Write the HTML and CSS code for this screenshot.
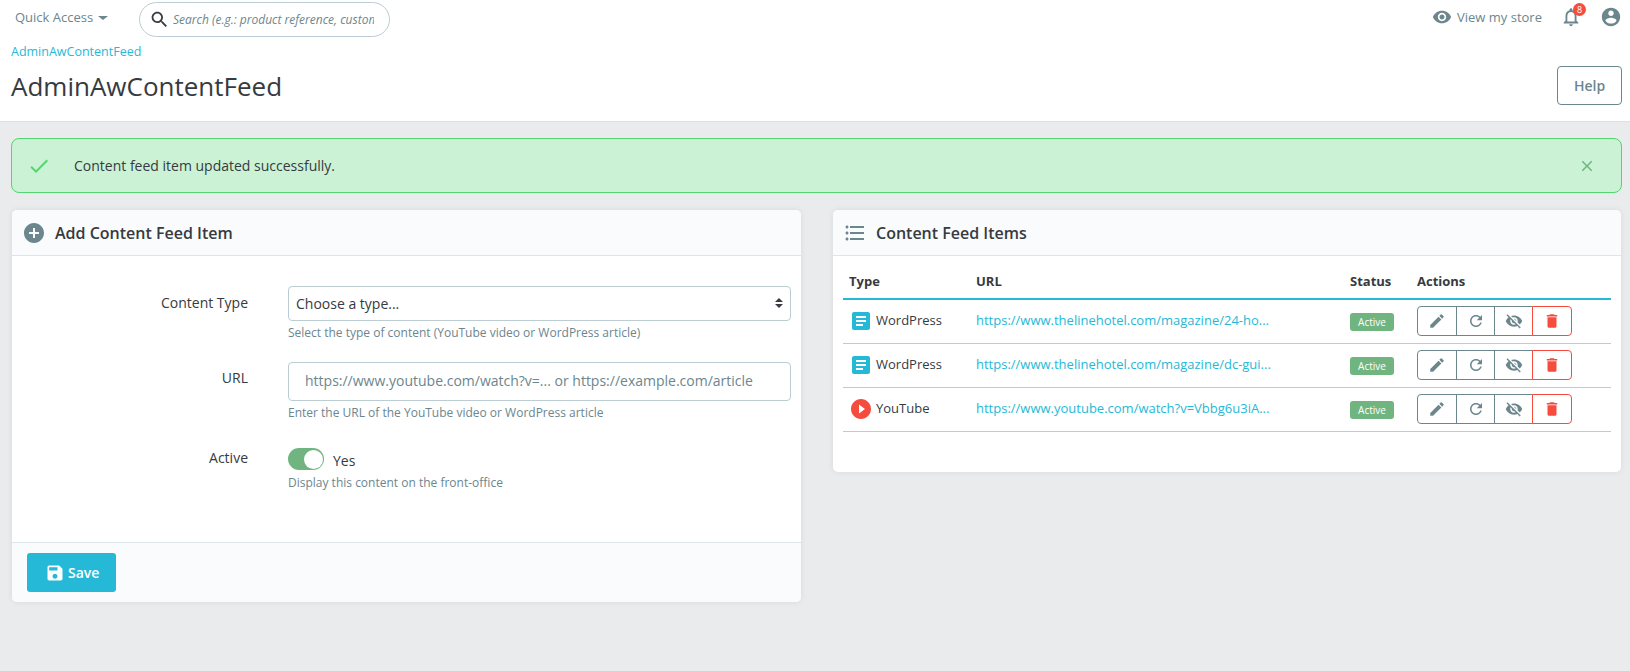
FILE: index.html
```html
<!DOCTYPE html>
<html lang="en">
<head>
    <meta charset="UTF-8">
    <meta name="viewport" content="width=device-width, initial-scale=1.0">
    <title>AdminAwContentFeed</title>
    <link rel="stylesheet" href="styles.css">
</head>
<body>
    <svg class="icon-defs" aria-hidden="true">
        <symbol id="i-search" viewBox="0 0 24 24"><path d="M15.5 14h-.79l-.28-.27C15.41 12.59 16 11.11 16 9.5 16 5.91 13.09 3 9.5 3S3 5.91 3 9.5 5.91 16 9.5 16c1.61 0 3.09-.59 4.23-1.57l.27.28v.79l5 4.99L20.49 19l-4.99-5zm-6 0C7.01 14 5 11.99 5 9.5S7.01 5 9.5 5 14 7.01 14 9.5 11.99 14 9.5 14z"/></symbol>
        <symbol id="i-eye" viewBox="0 0 24 24"><path d="M12 4.5C7 4.5 2.73 7.61 1 12c1.73 4.39 6 7.5 11 7.5s9.27-3.11 11-7.5c-1.73-4.39-6-7.5-11-7.5zM12 17c-2.76 0-5-2.24-5-5s2.24-5 5-5 5 2.24 5 5-2.24 5-5 5zm0-8c-1.66 0-3 1.34-3 3s1.34 3 3 3 3-1.34 3-3-1.34-3-3-3z"/></symbol>
        <symbol id="i-bell" viewBox="0 0 24 24"><path d="M12 22c1.1 0 2-.9 2-2h-4c0 1.1.9 2 2 2zm6-6v-5c0-3.07-1.63-5.64-4.5-6.32V4c0-.83-.67-1.5-1.5-1.5s-1.5.67-1.5 1.5v.68C7.64 5.36 6 7.92 6 11v5l-2 2v1h16v-1l-2-2zm-2 1H8v-6c0-2.48 1.51-4.5 4-4.5s4 2.02 4 4.5v6z"/></symbol>
        <symbol id="i-account" viewBox="0 0 24 24"><path d="M12 2C6.48 2 2 6.48 2 12s4.48 10 10 10 10-4.48 10-10S17.52 2 12 2zm0 3c1.66 0 3 1.34 3 3s-1.34 3-3 3-3-1.34-3-3 1.34-3 3-3zm0 14.2c-2.5 0-4.71-1.28-6-3.22.03-1.99 4-3.08 6-3.08 1.99 0 5.97 1.09 6 3.08-1.29 1.94-3.5 3.22-6 3.22z"/></symbol>
        <symbol id="i-check" viewBox="0 0 24 24"><path d="M9 16.17L4.83 12l-1.42 1.41L9 19 21 7l-1.41-1.41z"/></symbol>
        <symbol id="i-close" viewBox="0 0 24 24"><path d="M19 6.41L17.59 5 12 10.59 6.41 5 5 6.41 10.59 12 5 17.59 6.41 19 12 13.41 17.59 19 19 17.59 13.41 12z"/></symbol>
        <symbol id="i-add" viewBox="0 0 24 24"><path d="M12 2C6.48 2 2 6.48 2 12s4.48 10 10 10 10-4.48 10-10S17.52 2 12 2zm5 11h-4v4h-2v-4H7v-2h4V7h2v4h4v2z"/></symbol>
        <symbol id="i-list" viewBox="0 0 24 24"><path d="M4 10.5c-.83 0-1.5.67-1.5 1.5s.67 1.5 1.5 1.5 1.5-.67 1.5-1.5-.67-1.5-1.5-1.5zm0-6c-.83 0-1.5.67-1.5 1.5S3.17 7.5 4 7.5 5.5 6.83 5.5 6 4.83 4.5 4 4.5zm0 12c-.83 0-1.5.68-1.5 1.5s.68 1.5 1.5 1.5 1.5-.68 1.5-1.5-.67-1.5-1.5-1.5zM7 19h14v-2H7v2zm0-6h14v-2H7v2zm0-8v2h14V5H7z"/></symbol>
        <symbol id="i-edit" viewBox="0 0 24 24"><path d="M3 17.25V21h3.75L17.81 9.94l-3.75-3.75L3 17.25zM20.71 7.04c.39-.39.39-1.02 0-1.41l-2.34-2.34c-.39-.39-1.02-.39-1.41 0l-1.83 1.83 3.75 3.75 1.83-1.83z"/></symbol>
        <symbol id="i-refresh" viewBox="0 0 24 24"><path d="M17.65 6.35C16.2 4.9 14.21 4 12 4c-4.42 0-7.99 3.58-7.99 8s3.57 8 7.99 8c3.73 0 6.84-2.55 7.73-6h-2.08c-.82 2.33-3.04 4-5.65 4-3.31 0-6-2.69-6-6s2.69-6 6-6c1.66 0 3.14.69 4.22 1.78L13 11h7V4l-2.35 2.35z"/></symbol>
        <symbol id="i-eye-off" viewBox="0 0 24 24"><path d="M12 7c2.76 0 5 2.24 5 5 0 .65-.13 1.26-.36 1.83l2.92 2.92c1.51-1.26 2.7-2.89 3.43-4.75-1.73-4.39-6-7.5-11-7.5-1.4 0-2.74.25-3.98.7l2.16 2.16C10.74 7.13 11.35 7 12 7zM2 4.27l2.28 2.28.46.46C3.08 8.3 1.78 10.02 1 12c1.73 4.39 6 7.5 11 7.5 1.55 0 3.03-.3 4.38-.84l.42.42L19.73 22 21 20.73 3.27 3 2 4.27zM7.53 9.8l1.55 1.55c-.05.21-.08.43-.08.65 0 1.66 1.34 3 3 3 .22 0 .44-.03.65-.08l1.55 1.55c-.67.33-1.41.53-2.2.53-2.76 0-5-2.24-5-5 0-.79.2-1.53.53-2.2zm4.31-.78l3.15 3.15.02-.16c0-1.66-1.34-3-3-3l-.17.01z"/></symbol>
        <symbol id="i-delete" viewBox="0 0 24 24"><path d="M6 19c0 1.1.9 2 2 2h8c1.1 0 2-.9 2-2V7H6v12zM19 4h-3.5l-1-1h-5l-1 1H5v2h14V4z"/></symbol>
        <symbol id="i-save" viewBox="0 0 24 24"><path d="M17 3H5c-1.11 0-2 .9-2 2v14c0 1.1.89 2 2 2h14c1.1 0 2-.9 2-2V7l-4-4zm-5 16c-1.66 0-3-1.34-3-3s1.34-3 3-3 3 1.34 3 3-1.34 3-3 3zm3-10H5V5h10v4z"/></symbol>
        <symbol id="i-article" viewBox="0 0 24 24"><path d="M19 3H5c-1.1 0-2 .9-2 2v14c0 1.1.9 2 2 2h14c1.1 0 2-.9 2-2V5c0-1.1-.9-2-2-2zm-5 14H7v-2h7v2zm3-4H7v-2h10v2zm0-4H7V7h10v2z"/></symbol>
        <symbol id="i-play" viewBox="0 0 24 24"><path d="M12 2C6.48 2 2 6.48 2 12s4.48 10 10 10 10-4.48 10-10S17.52 2 12 2zm-2 14.5v-9l6 4.5-6 4.5z"/></symbol>
    </svg>

    <header class="page-head">
        <div class="topbar">
            <a class="quick-access" href="#">Quick Access <span class="caret"></span></a>
            <div class="search">
                <svg class="icon search-icon"><use href="#i-search"/></svg>
                <input class="search-input" type="text" placeholder="Search (e.g.: product reference, customer name…)">
            </div>
            <div class="topbar-right">
                <a class="store-link" href="#"><svg class="icon store-icon"><use href="#i-eye"/></svg>View my store</a>
                <span class="notif">
                    <svg class="icon notif-icon"><use href="#i-bell"/></svg>
                    <span class="notif-count">8</span>
                </span>
                <svg class="icon account-icon"><use href="#i-account"/></svg>
            </div>
        </div>
        <a class="breadcrumb" href="#">AdminAwContentFeed</a>
        <div class="title-row">
            <h1>AdminAwContentFeed</h1>
            <a class="help-btn" href="#">Help</a>
        </div>
    </header>

    <main class="content">
        <div class="alert">
            <svg class="icon alert-check"><use href="#i-check"/></svg>
            <span class="alert-text">Content feed item updated successfully.</span>
            <svg class="icon alert-close"><use href="#i-close"/></svg>
        </div>

        <div class="columns">
            <section class="card">
                <div class="card-head">
                    <svg class="icon head-icon"><use href="#i-add"/></svg>
                    <h2>Add Content Feed Item</h2>
                </div>
                <form class="card-form">
                    <div class="form-row row-type">
                        <label class="form-label" for="type">Content Type</label>
                        <div>
                            <div class="select-wrap">
                                <select class="form-select" id="type">
                                    <option>Choose a type...</option>
                                </select>
                            </div>
                            <p class="form-help">Select the type of content (YouTube video or WordPress article)</p>
                        </div>
                    </div>
                    <div class="form-row row-url">
                        <label class="form-label" for="url">URL</label>
                        <div>
                            <input class="form-input" id="url" type="text" placeholder="https://www.youtube.com/watch?v=... or https://example.com/article">
                            <p class="form-help">Enter the URL of the YouTube video or WordPress article</p>
                        </div>
                    </div>
                    <div class="form-row">
                        <span class="form-label label-active">Active</span>
                        <div>
                            <div class="switch-line">
                                <span class="switch"><span class="switch-knob"></span></span>
                                <span class="switch-text">Yes</span>
                            </div>
                            <p class="form-help help-active">Display this content on the front-office</p>
                        </div>
                    </div>
                </form>
                <div class="card-foot">
                    <button class="save-btn" type="button"><svg class="icon save-icon"><use href="#i-save"/></svg>Save</button>
                </div>
            </section>

            <section class="card">
                <div class="card-head">
                    <svg class="icon head-icon"><use href="#i-list"/></svg>
                    <h2>Content Feed Items</h2>
                </div>
                <div class="card-table">
                    <table class="items">
                        <thead>
                            <tr>
                                <th class="col-type">Type</th>
                                <th class="col-url">URL</th>
                                <th class="col-status">Status</th>
                                <th>Actions</th>
                            </tr>
                        </thead>
                        <tbody>
                            <tr>
                                <td><span class="type-cell"><svg class="icon type-icon blue"><use href="#i-article"/></svg><span class="type-name">WordPress</span></span></td>
                                <td><a class="item-link" href="#">https://www.thelinehotel.com/magazine/24-ho...</a></td>
                                <td><span class="badge">Active</span></td>
                                <td>
                                    <div class="actions">
                                        <button class="action" type="button"><svg class="icon"><use href="#i-edit"/></svg></button>
                                        <button class="action" type="button"><svg class="icon"><use href="#i-refresh"/></svg></button>
                                        <button class="action" type="button"><svg class="icon"><use href="#i-eye-off"/></svg></button>
                                        <button class="action action-danger" type="button"><svg class="icon"><use href="#i-delete"/></svg></button>
                                    </div>
                                </td>
                            </tr>
                            <tr>
                                <td><span class="type-cell"><svg class="icon type-icon blue"><use href="#i-article"/></svg><span class="type-name">WordPress</span></span></td>
                                <td><a class="item-link" href="#">https://www.thelinehotel.com/magazine/dc-gui...</a></td>
                                <td><span class="badge">Active</span></td>
                                <td>
                                    <div class="actions">
                                        <button class="action" type="button"><svg class="icon"><use href="#i-edit"/></svg></button>
                                        <button class="action" type="button"><svg class="icon"><use href="#i-refresh"/></svg></button>
                                        <button class="action" type="button"><svg class="icon"><use href="#i-eye-off"/></svg></button>
                                        <button class="action action-danger" type="button"><svg class="icon"><use href="#i-delete"/></svg></button>
                                    </div>
                                </td>
                            </tr>
                            <tr>
                                <td><span class="type-cell"><svg class="icon type-icon red"><use href="#i-play"/></svg><span class="type-name">YouTube</span></span></td>
                                <td><a class="item-link" href="#">https://www.youtube.com/watch?v=Vbbg6u3iA...</a></td>
                                <td><span class="badge">Active</span></td>
                                <td>
                                    <div class="actions">
                                        <button class="action" type="button"><svg class="icon"><use href="#i-edit"/></svg></button>
                                        <button class="action" type="button"><svg class="icon"><use href="#i-refresh"/></svg></button>
                                        <button class="action" type="button"><svg class="icon"><use href="#i-eye-off"/></svg></button>
                                        <button class="action action-danger" type="button"><svg class="icon"><use href="#i-delete"/></svg></button>
                                    </div>
                                </td>
                            </tr>
                        </tbody>
                    </table>
                </div>
            </section>
        </div>
    </main>
</body>
</html>
```

FILE: styles.css
```css
* {
    box-sizing: border-box;
}
html, body {
    height: 100%;
}
body {
    margin: 0;
    background: #eaebec;
    color: #363a41;
    font-family: "Open Sans", sans-serif;
    font-size: 14px;
    overflow: hidden;
}
a {
    text-decoration: none;
}
.icon-defs {
    display: none;
}
.icon {
    display: block;
    width: 24px;
    height: 24px;
    fill: #6c868e;
    flex: none;
}

/* header */
.page-head {
    height: 122px;
    background: #fff;
    border-bottom: 1px solid #dfdfdf;
    padding-top: 2px;
}
.topbar {
    display: flex;
    align-items: center;
    height: 34px;
    padding: 0 8px 0 15px;
}
.quick-access {
    width: 124px;
    margin-top: -4px;
    color: #6c868e;
    font-size: 13px;
}
.caret {
    display: inline-block;
    margin-left: 1px;
    vertical-align: 2px;
    border-top: 4px solid #6c868e;
    border-left: 5px solid transparent;
    border-right: 5px solid transparent;
}
.search {
    display: flex;
    align-items: center;
    width: 251px;
    height: 35px;
    padding: 0 15px 0 9px;
    border: 1px solid #bbcdd2;
    border-radius: 18px;
}
.search-icon {
    width: 21px;
    height: 21px;
    fill: #363a41;
}
.search-input {
    flex: 1;
    min-width: 0;
    margin-left: 3px;
    padding: 0;
    border: 0;
    outline: 0;
    background: none;
    font: italic 12px "Open Sans", sans-serif;
}
.search-input::placeholder {
    color: #6c868e;
    opacity: 1;
}
.topbar-right {
    display: flex;
    align-items: center;
    margin-left: auto;
    margin-top: -4px;
}
.store-link {
    display: flex;
    align-items: center;
    color: #6c868e;
    font-size: 13px;
}
.store-icon {
    width: 20px;
    height: 20px;
    margin-right: 5px;
}
.notif {
    position: relative;
    margin-left: 18px;
}
.notif-icon {
    width: 22px;
    height: 22px;
}
.notif-count {
    position: absolute;
    top: -3px;
    right: -4px;
    width: 13px;
    height: 13px;
    border-radius: 50%;
    background: #f54c3e;
    color: #fff;
    font-size: 9px;
    line-height: 13px;
    text-align: center;
}
.account-icon {
    width: 22px;
    height: 22px;
    margin-left: 18px;
}
.breadcrumb {
    display: block;
    margin: 7px 0 0 11px;
    color: #25b9d7;
    font-size: 12.5px;
    line-height: 18px;
}
.title-row {
    display: flex;
    align-items: center;
    justify-content: space-between;
    height: 39px;
    margin-top: 5px;
    padding: 0 8px 0 11px;
}
h1 {
    margin: 0;
    font-size: 26px;
    font-weight: 400;
    line-height: 34px;
}
.help-btn {
    width: 65px;
    height: 39px;
    border: 1px solid #6c868e;
    border-radius: 4px;
    color: #6c868e;
    font-size: 14px;
    font-weight: 600;
    line-height: 37px;
    text-align: center;
}

/* page content */
.content {
    padding: 16px 8px 0 11px;
}
.alert {
    display: flex;
    align-items: center;
    height: 55px;
    margin-bottom: 17px;
    padding: 0 25px 0 15px;
    border: 1px solid #53d572;
    border-radius: 8px;
    background: #cbf2d4;
}
.alert-check {
    width: 24px;
    height: 24px;
    fill: #53d572;
}
.alert-text {
    margin-left: 23px;
    font-size: 14px;
}
.alert-close {
    width: 18px;
    height: 18px;
    margin-left: auto;
    fill: #70b580;
}
.columns {
    display: grid;
    grid-template-columns: 789px 788px;
    gap: 32px;
    align-items: start;
    padding-left: 1px;
}
.card {
    background: #fff;
    border-radius: 5px;
    box-shadow: 0 0 6px rgba(0, 0, 0, .08);
    overflow: hidden;
}
.card-head {
    display: flex;
    align-items: center;
    height: 46px;
    padding-left: 10px;
    background: #fafbfc;
    border-bottom: 1px solid #dbe6e9;
}
.head-icon {
    width: 24px;
    height: 24px;
}
h2 {
    margin: 0 0 0 9px;
    font-size: 16px;
    font-weight: 600;
}

/* add form */
.card-form {
    height: 286px;
    padding: 30px 10px 0 0;
}
.form-row {
    display: grid;
    grid-template-columns: 236px 1fr;
    column-gap: 40px;
}
.row-type {
    margin-bottom: 21px;
}
.row-url {
    margin-bottom: 20px;
}
.form-label {
    padding-top: 7px;
    font-size: 14px;
    line-height: 20px;
    text-align: right;
}
.row-url .form-label {
    padding-top: 6px;
}
.label-active {
    padding-top: 7px;
}
.select-wrap {
    position: relative;
}
.select-wrap::before,
.select-wrap::after {
    content: "";
    position: absolute;
    right: 8px;
    border-left: 4px solid transparent;
    border-right: 4px solid transparent;
    pointer-events: none;
}
.select-wrap::before {
    top: 12px;
    border-bottom: 4px solid #363a41;
}
.select-wrap::after {
    top: 18px;
    border-top: 4px solid #363a41;
}
.form-select {
    display: block;
    width: 100%;
    height: 35px;
    padding: 0 7px;
    border: 1px solid #bbcdd2;
    border-radius: 4px;
    background: #fff;
    color: #363a41;
    font: 14px "Open Sans", sans-serif;
    appearance: none;
}
.form-input {
    display: block;
    width: 100%;
    height: 39px;
    padding: 0 16px 2px;
    border: 1px solid #bbcdd2;
    border-radius: 4px;
    font: 14px "Open Sans", sans-serif;
}
.form-input::placeholder {
    color: #6c868e;
    opacity: 1;
}
.form-help {
    margin: 4px 0 0;
    color: #6c868e;
    font-size: 12px;
    line-height: 16px;
}
.switch-line {
    display: flex;
    align-items: center;
    height: 22px;
    margin-top: 7px;
}
.switch {
    display: flex;
    justify-content: flex-end;
    align-items: center;
    width: 36px;
    height: 22px;
    padding: 1px;
    border-radius: 11px;
    background: #70b580;
}
.switch-knob {
    width: 19px;
    height: 19px;
    border-radius: 50%;
    background: #fff;
}
.switch-text {
    margin: 2px 0 0 9px;
}
.help-active {
    margin-top: 5px;
}
.card-foot {
    height: 60px;
    padding: 10px 15px;
    background: #fafbfc;
    border-top: 1px solid #dbe6e9;
}
.save-btn {
    display: flex;
    align-items: center;
    width: 89px;
    height: 39px;
    padding: 0 0 0 18px;
    border: 0;
    border-radius: 3px;
    background: #25b9d7;
    color: #fff;
    font: 600 14px "Open Sans", sans-serif;
}
.save-icon {
    width: 20px;
    height: 20px;
    margin-right: 3px;
    fill: #fff;
}

/* items table */
.card-table {
    padding: 10px 10px 40px;
}
.items {
    width: 768px;
    border-collapse: separate;
    border-spacing: 0;
    table-layout: fixed;
    font-size: 13px;
}
.items th {
    height: 34px;
    padding: 0 6px 2px;
    border-bottom: 2px solid #25b9d7;
    font-weight: 700;
    text-align: left;
}
.col-type {
    width: 127px;
}
.col-url {
    width: 374px;
}
.col-status {
    width: 67px;
}
.items td {
    height: 44px;
    padding: 0 6px 1px;
    border-bottom: 1px solid #bbcdd2;
}
.type-cell {
    display: flex;
    align-items: center;
    gap: 3px;
}
.type-name {
    margin-bottom: 2px;
}
.type-icon.blue {
    fill: #25b9d7;
}
.type-icon.red {
    fill: #f54c3e;
}
.item-link {
    display: block;
    margin-bottom: 3px;
    color: #25b9d7;
}
.badge {
    display: block;
    width: 44px;
    height: 18px;
    margin-top: 2px;
    border-radius: 3px;
    background: #70b580;
    color: #fff;
    font-size: 10px;
    line-height: 18px;
    text-align: center;
}
.actions {
    display: flex;
}
.action {
    display: flex;
    align-items: center;
    justify-content: center;
    width: 39px;
    height: 30px;
    margin-left: -1px;
    padding: 0;
    border: 1px solid #6c868e;
    background: #fff;
}
.action:first-child {
    width: 40px;
    margin-left: 0;
    border-radius: 4px 0 0 4px;
}
.action .icon {
    width: 18px;
    height: 18px;
}
.action-danger {
    width: 40px;
    border-color: #f54c3e;
    border-radius: 0 4px 4px 0;
}
.action-danger .icon {
    fill: #f54c3e;
}
```
